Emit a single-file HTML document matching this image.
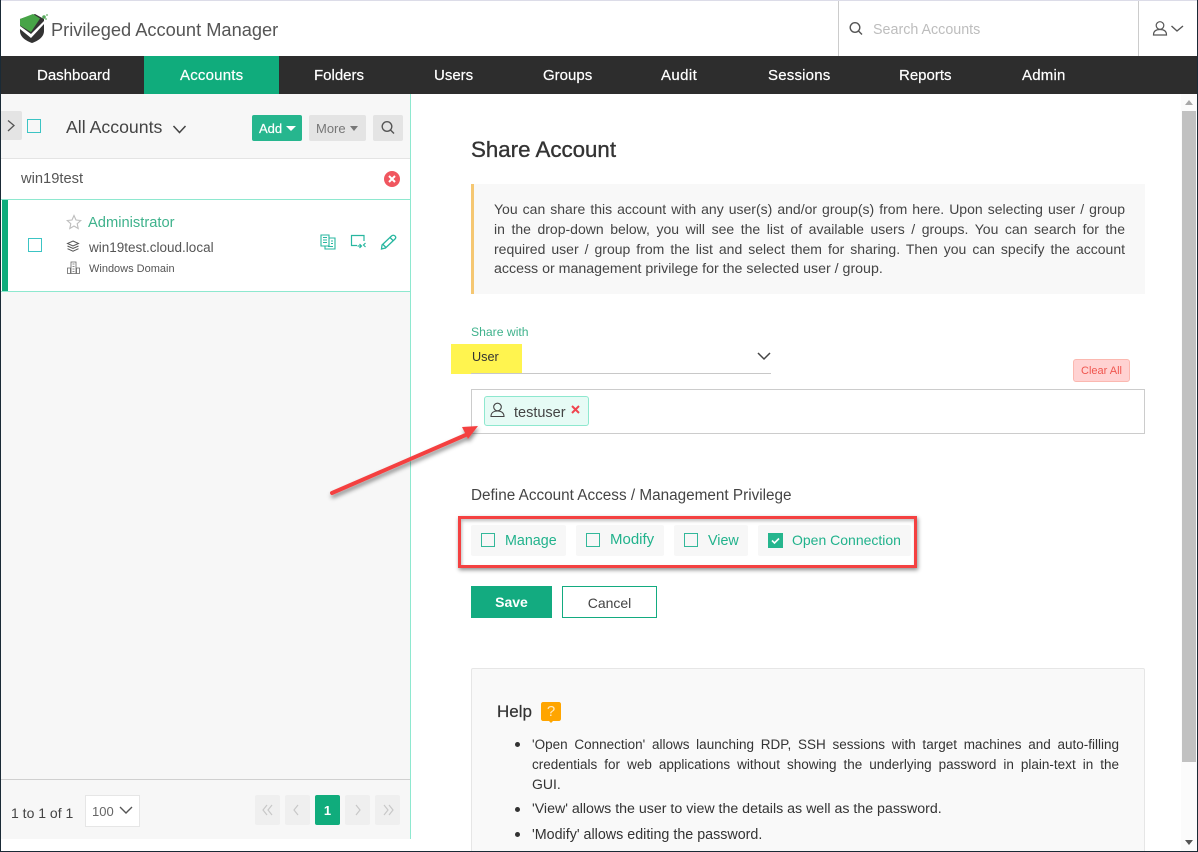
<!DOCTYPE html>
<html><head><meta charset="utf-8">
<style>
html,body{margin:0;padding:0;width:1198px;height:852px;overflow:hidden;background:#fff}
body{position:relative;font-family:"Liberation Sans",sans-serif;color:#333}
.a{position:absolute}
.t{position:absolute;white-space:nowrap}
.nav{position:absolute;top:56px;height:38px;line-height:40px;color:#fff;font-size:15px;font-weight:400;white-space:nowrap;-webkit-text-stroke:.2px #fff}
.cb2{position:absolute;width:12px;height:12px;border:1.5px solid #33b89a;}
.pill{position:absolute;top:525px;height:31px;background:#f7f7f7;border-radius:2px}
.lab{position:absolute;top:533px;font-size:14.3px;color:#21b28c;white-space:nowrap;line-height:16px}
.pg{position:absolute;top:795px;width:25px;height:30px;background:#efefef;border-radius:2px}
.j{position:absolute;text-align:justify;text-align-last:justify;white-space:normal}
</style></head>
<body>
<!-- frame -->
<div class="a" style="left:0;top:0;width:1198px;height:1px;background:#dcdce8"></div>

<!-- logo -->
<svg class="a" style="left:18px;top:11px" width="32" height="34" viewBox="0 0 32 34">
<path d="M2 8 L17 3 L26 8 L26 20 C26 26 20 30 14 32 C8 30 2 26 2 20 Z" fill="#333"/>
<path d="M2 15 L13 23 L27 9 L26 13 L13 27 L2 18 Z" fill="#fff"/>
<path d="M2 8 L15 3 L22 7.500 L13 21 L2 14.500 Z" fill="#47a447"/>
<circle cx="26" cy="6" r="1.800" fill="#55a85a"/><circle cx="29" cy="4" r="1" fill="#8ac48d"/><circle cx="28" cy="8" r="1" fill="#8ac48d"/>
</svg>
<div class="t" style="left:51px;top:18px;font-size:18.25px;line-height:24px;color:#555">Privileged Account Manager</div>

<!-- search -->
<div class="a" style="left:838px;top:1px;width:1px;height:55px;background:#ccc"></div>
<div class="a" style="left:1138px;top:1px;width:1px;height:55px;background:#ccc"></div>
<svg class="a" style="left:848px;top:21px" width="16" height="16" viewBox="0 0 16 16" fill="none" stroke="#555" stroke-width="1.400"><circle cx="7" cy="6.500" r="4.800"/><path d="M10.500 10 L14 13.500"/></svg>
<div class="t" style="left:873px;top:22px;font-size:14.3px;line-height:16px;color:#bdbdbd">Search Accounts</div>
<svg class="a" style="left:1152px;top:20px" width="34" height="17" viewBox="0 0 34 17" fill="none" stroke="#555" stroke-width="1.200"><circle cx="8" cy="5.500" r="3.800"/><path d="M1.500 15 C1.500 11 4 9.500 8 9.500 C12 9.500 14.500 11 14.500 15 Z"/><path d="M19.500 6 L25 11 L31 6" stroke-width="1.400"/></svg>

<!-- nav -->
<div class="a" style="left:0;top:56px;width:1198px;height:38px;background:#2d2d2d"></div>
<div class="a" style="left:144px;top:56px;width:135px;height:38px;background:#10ac7c"></div>
<div class="nav" style="left:37px">Dashboard</div>
<div class="nav" style="left:180px;letter-spacing:.2px">Accounts</div>
<div class="nav" style="left:314px">Folders</div>
<div class="nav" style="left:434px">Users</div>
<div class="nav" style="left:543px">Groups</div>
<div class="nav" style="left:661px;letter-spacing:.4px">Audit</div>
<div class="nav" style="left:768px;letter-spacing:.2px">Sessions</div>
<div class="nav" style="left:899px">Reports</div>
<div class="nav" style="left:1022px;letter-spacing:.2px">Admin</div>

<!-- left panel -->
<div class="a" style="left:1px;top:94px;width:409px;height:745px;background:#f7f7f7"></div>
<div class="a" style="left:410px;top:94px;width:1px;height:745px;background:#8ee8cf"></div>
<div class="a" style="left:1px;top:111px;width:21px;height:29px;background:#e4e4e4;border-radius:0 2px 2px 0"></div>
<svg class="a" style="left:6px;top:119px" width="10" height="14" viewBox="0 0 10 14" fill="none" stroke="#555" stroke-width="1.300"><path d="M2 1.500 L8 6.500 L2 12"/></svg>
<div class="a" style="left:27px;top:119px;width:12px;height:12px;border:1.500px solid #3cc4c4"></div>
<div class="t" style="left:66px;top:117px;font-size:17.7px;line-height:20px;color:#444">All Accounts</div>
<svg class="a" style="left:172px;top:124px" width="15" height="11" viewBox="0 0 15 11" fill="none" stroke="#444" stroke-width="1.500"><path d="M1.500 2 L7.500 8.500 L13.500 2"/></svg>
<div class="a" style="left:252px;top:115px;width:50px;height:26px;background:#26b68e;border-radius:2px"></div>
<div class="t" style="left:259px;top:120px;font-size:13px;line-height:17px;color:#fff;-webkit-text-stroke:.2px #fff">Add</div>
<div class="a" style="left:286px;top:126px;border-left:5px solid transparent;border-right:5px solid transparent;border-top:5px solid #fff"></div>
<div class="a" style="left:309px;top:115px;width:57px;height:26px;background:#e4e4e4;border-radius:2px"></div>
<div class="t" style="left:316px;top:120px;font-size:13px;line-height:17px;color:#777">More</div>
<div class="a" style="left:350px;top:126px;border-left:4.500px solid transparent;border-right:4.500px solid transparent;border-top:5px solid #777"></div>
<div class="a" style="left:373px;top:115px;width:30px;height:26px;background:#e4e4e4;border-radius:2px"></div>
<svg class="a" style="left:380px;top:120px" width="16" height="16" viewBox="0 0 16 16" fill="none" stroke="#555" stroke-width="1.400"><circle cx="7" cy="6.500" r="4.800"/><path d="M10.500 10 L14 13.500"/></svg>

<!-- search result row -->
<div class="a" style="left:1px;top:158px;width:409px;height:41px;background:#fff;border-top:1px solid #e4e4e4"></div>
<div class="t" style="left:21px;top:171px;font-size:14.7px;line-height:17px;color:#555">win19test</div>
<div class="a" style="left:384px;top:171px;width:16px;height:16px;border-radius:50%;background:#f0565f"></div>
<svg class="a" style="left:384px;top:171px" width="16" height="16" viewBox="0 0 16 16" stroke="#fff" stroke-width="2"><path d="M5 5 L11 11 M11 5 L5 11"/></svg>

<!-- account row -->
<div class="a" style="left:1px;top:199px;width:409px;background:#fff;border-top:1px solid #8ee8cf;border-bottom:1px solid #8ee8cf;box-sizing:border-box;height:93px"></div>
<div class="a" style="left:2px;top:200px;width:6px;height:91px;background:#10ac7c"></div>
<div class="a" style="left:28px;top:238px;width:12px;height:12px;border:1.500px solid #3cc4c4"></div>
<svg class="a" style="left:66px;top:214px" width="16" height="16" viewBox="0 0 16 16" fill="none" stroke="#bdbdbd" stroke-width="1.100"><path d="M8 1.500 L10 6 L14.800 6.500 L11.200 9.700 L12.200 14.500 L8 12 L3.800 14.500 L4.800 9.700 L1.200 6.500 L6 6 Z"/></svg>
<div class="t" style="left:88px;top:215px;font-size:14.7px;line-height:16px;color:#3fb28c">Administrator</div>
<svg class="a" style="left:66px;top:240px" width="14" height="13" viewBox="0 0 14 13" fill="none" stroke="#555" stroke-width="1"><path d="M7 1 L12.500 3.500 L7 6 L1.500 3.500 Z"/><path d="M1.500 6 L7 8.500 L12.500 6"/><path d="M1.500 8.700 L7 11.200 L12.500 8.700"/></svg>
<div class="t" style="left:89px;top:240px;font-size:13.5px;line-height:16px;color:#555">win19test.cloud.local</div>
<svg class="a" style="left:67px;top:261px" width="13" height="13" viewBox="0 0 13 13" fill="#777" stroke="#666" stroke-width=".8"><path d="M.5 12.500 V7 H3.500 V12.500 Z M4 12.500 V1 H9 V12.500 Z M9.500 12.500 V7 H12.500 V12.500 Z" fill="none"/><path d="M5.500 3 H7.500 M5.500 5.500 H7.500 M5.500 8 H7.500 M5.500 10.500 H7.500"/></svg>
<div class="t" style="left:89px;top:262px;font-size:11px;line-height:14px;color:#555">Windows Domain</div>
<svg class="a" style="left:320px;top:234px" width="17" height="16" viewBox="0 0 17 16" fill="none" stroke="#28b7a0" stroke-width="1.100"><path d="M1 1 H9 V12 H1 Z M3 3.500 H7 M3 6 H7 M3 8.500 H7"/><path d="M9 4 H15 V15 H5 V12 M11 7 H13 M11 9.500 H13 M8 12.500 H13"/></svg>
<svg class="a" style="left:350px;top:234px" width="17" height="15" viewBox="0 0 17 15" fill="none" stroke="#28b7a0" stroke-width="1.200"><path d="M14 7 V1.500 H1.500 V11.500 H7"/><path d="M7.500 12 H11 M9.500 10 L11.500 12 L9.500 14 M15.500 9 L13.500 11 L15.500 13"/></svg>
<svg class="a" style="left:380px;top:234px" width="17" height="16" viewBox="0 0 17 16" fill="none" stroke="#28b7a0" stroke-width="1.300"><path d="M2 11 L11.500 2 C12.500 1 14 1 15 2 C16 3 16 4 15 5 L5.500 14 L1.500 15 Z"/><path d="M10 3.500 L13.500 7 M3 10.500 L6 13.500"/></svg>

<!-- footer left -->
<div class="a" style="left:1px;top:779px;width:409px;height:1px;background:#d0d0d0"></div>
<div class="t" style="left:11px;top:805px;font-size:14px;line-height:16px;color:#444">1 to 1 of 1</div>
<div class="a" style="left:85px;top:795px;width:53px;height:30px;background:#fff;border:1px solid #e6e6e6"></div>
<div class="t" style="left:92px;top:804px;font-size:13px;line-height:15px;color:#666">100</div>
<svg class="a" style="left:119px;top:806px" width="14" height="9" viewBox="0 0 14 9" fill="none" stroke="#555" stroke-width="1.400"><path d="M1 1 L7 7 L13 1"/></svg>
<div class="pg" style="left:255px"></div>
<div class="pg" style="left:285px"></div>
<div class="pg" style="left:315px;background:#10ac7c"></div>
<div class="pg" style="left:345px"></div>
<div class="pg" style="left:375px"></div>
<svg class="a" style="left:255px;top:795px" width="145" height="30" viewBox="0 0 145 30" fill="none" stroke="#c8c8c8" stroke-width="1.200"><path d="M13 10 L9 15 L13 20 M18 10 L14 15 L18 20 M44 10 L40 15 L44 20 M102 10 L106 15 L102 20 M130 10 L134 15 L130 20 M135 10 L139 15 L135 20" transform="translate(-1 0)"/></svg>
<div class="t" style="left:315px;top:803px;width:25px;text-align:center;font-size:13px;line-height:15px;color:#fff;font-weight:bold">1</div>

<!-- right content -->
<div class="t" style="left:471px;top:137px;font-size:22.3px;line-height:26px;color:#333;-webkit-text-stroke:.35px #333">Share Account</div>
<div class="a" style="left:471px;top:184px;width:674px;height:110px;background:#f8f8f8"></div>
<div class="a" style="left:471px;top:184px;width:3px;height:110px;background:#f5c772"></div>
<div class="j" style="left:494px;top:199px;width:631px;font-size:14px;line-height:20px;color:#444">You can share this account with any user(s) and/or group(s) from here. Upon selecting user / group</div>
<div class="j" style="left:494px;top:219px;width:631px;font-size:14px;line-height:20px;color:#444">in the drop-down below, you will see the list of available users / groups. You can search for the</div>
<div class="j" style="left:494px;top:239px;width:631px;font-size:14px;line-height:20px;color:#444">required user / group from the list and select them for sharing. Then you can specify the account</div>
<div class="t" style="left:494px;top:259px;font-size:14.2px;line-height:20px;color:#444">access or management privilege for the selected user / group.</div>

<div class="t" style="left:471px;top:325px;font-size:12.2px;line-height:15px;color:#3fb28c">Share with</div>
<div class="a" style="left:451px;top:344px;width:71px;height:30px;background:#fff44f"></div>
<div class="t" style="left:472px;top:350px;font-size:12.7px;line-height:15px;color:#333">User</div>
<div class="a" style="left:471px;top:373px;width:300px;height:1px;background:#c8c8c8"></div>
<svg class="a" style="left:757px;top:351px" width="14" height="10" viewBox="0 0 14 10" fill="none" stroke="#444" stroke-width="1.500"><path d="M1 2 L7 8 L13 2"/></svg>

<div class="a" style="left:1073px;top:359px;width:55px;height:21px;background:#ffd2d2;border:1px solid #fbb8b0;border-radius:3px"></div>
<div class="t" style="left:1081px;top:364px;font-size:11px;line-height:14px;color:#f0564f">Clear All</div>

<div class="a" style="left:471px;top:389px;width:672px;height:43px;background:#fff;border:1px solid #ccc"></div>
<div class="a" style="left:484px;top:396px;width:103px;height:28px;background:#e6fbf5;border:1px solid #8ee8cf;border-radius:3px"></div>
<svg class="a" style="left:490px;top:402px" width="15" height="16" viewBox="0 0 15 16" fill="none" stroke="#444" stroke-width="1.100"><circle cx="7.500" cy="5" r="3.800"/><path d="M1 14.500 C1 11 3.500 9 7.500 9 C11.500 9 14 11 14 14.500 Z"/></svg>
<div class="t" style="left:514px;top:405px;font-size:14.5px;line-height:16px;color:#444">testuser</div>
<svg class="a" style="left:571px;top:405px" width="9" height="9" viewBox="0 0 9 9" stroke="#f0454f" stroke-width="2"><path d="M1 1 L8 8 M8 1 L1 8"/></svg>

<div class="t" style="left:471px;top:488px;font-size:15.3px;line-height:16px;color:#444">Define Account Access / Management Privilege</div>

<div class="pill" style="left:471px;width:95px"></div>
<div class="pill" style="left:576px;width:88px"></div>
<div class="pill" style="left:674px;width:74px"></div>
<div class="pill" style="left:758px;width:153px"></div>
<div class="cb2" style="left:481px;top:533px"></div>
<div class="cb2" style="left:586px;top:533px"></div>
<div class="cb2" style="left:684px;top:533px"></div>
<div class="a" style="left:768px;top:533px;width:15px;height:15px;background:#26b68e"></div>
<svg class="a" style="left:768px;top:533px" width="15" height="15" viewBox="0 0 15 15" fill="none" stroke="#fff" stroke-width="1.600"><path d="M4 7.500 L6.500 10 L11 5.500"/></svg>
<div class="lab" style="left:505px">Manage</div>
<div class="lab" style="left:610px;font-size:15px;top:532px">Modify</div>
<div class="lab" style="left:708px">View</div>
<div class="lab" style="left:792px;font-size:14px;top:532px">Open Connection</div>
<div class="a" style="left:458px;top:516px;width:453px;height:46px;border:3px solid #f44141;box-shadow:1px 2px 4px rgba(0,0,0,.45), inset 1px 2px 3px rgba(0,0,0,.25)"></div>

<div class="a" style="left:471px;top:586px;width:81px;height:32px;background:#13ab80"></div>
<div class="t" style="left:471px;top:594px;width:81px;text-align:center;font-size:14px;line-height:16px;color:#fff;font-weight:bold">Save</div>
<div class="a" style="left:562px;top:586px;width:93px;height:30px;border:1px solid #13ab80;background:#fff"></div>
<div class="t" style="left:562px;top:595px;width:95px;text-align:center;font-size:14px;line-height:16px;color:#444">Cancel</div>

<!-- help -->
<div class="a" style="left:471px;top:668px;width:672px;height:184px;background:#f9f9f9;border:1px solid #e6e6e6;border-radius:2px"></div>
<div class="t" style="left:497px;top:702px;font-size:17px;line-height:20px;color:#333;-webkit-text-stroke:.2px #333">Help</div>
<svg class="a" style="left:541px;top:702px" width="20" height="22" viewBox="0 0 20 22"><path d="M2 0 H18 C19 0 20 1 20 2 V17 C20 18 19 19 18 19 H12 L10 21 L8 19 H2 C1 19 0 18 0 17 V2 C0 1 1 0 2 0 Z" fill="#ffa500"/></svg>
<div class="t" style="left:541px;top:702px;width:20px;text-align:center;font-size:15px;line-height:20px;color:#ffe9c0">?</div>
<div class="a" style="left:515px;top:742px;width:5px;height:5px;border-radius:50%;background:#333"></div>
<div class="a" style="left:515px;top:807px;width:5px;height:5px;border-radius:50%;background:#333"></div>
<div class="a" style="left:515px;top:832px;width:5px;height:5px;border-radius:50%;background:#333"></div>
<div class="j" style="left:532px;top:735px;width:587px;font-size:13.5px;line-height:20px;color:#333">'Open Connection' allows launching RDP, SSH sessions with target machines and auto-filling</div>
<div class="j" style="left:532px;top:755px;width:587px;font-size:13.5px;line-height:20px;color:#333">credentials for web applications without showing the underlying password in plain-text in the</div>
<div class="t" style="left:532px;top:774px;font-size:14px;line-height:20px;color:#333">GUI.</div>
<div class="t" style="left:532px;top:799px;font-size:14.2px;line-height:20px;color:#333">'View' allows the user to view the details as well as the password.</div>
<div class="t" style="left:532px;top:825px;font-size:14.3px;line-height:20px;color:#333">'Modify' allows editing the password.</div>

<!-- scrollbar -->
<div class="a" style="left:1181px;top:94px;width:16px;height:757px;background:#fbfbfb"></div>
<div class="a" style="left:1182px;top:111px;width:14px;height:651px;background:#c1c1c1"></div>
<div class="a" style="left:1185px;top:100px;border-left:4px solid transparent;border-right:4px solid transparent;border-bottom:5px solid #a8a8a8"></div>
<div class="a" style="left:1185px;top:840px;border-left:4px solid transparent;border-right:4px solid transparent;border-top:5px solid #555"></div>

<!-- arrow -->
<svg class="a" style="left:320px;top:415px" width="170" height="90" viewBox="0 0 170 90">
<defs><filter id="s" x="-20%" y="-20%" width="140%" height="140%"><feDropShadow dx="1" dy="3" stdDeviation="2" flood-color="#000" flood-opacity=".45"/></filter></defs>
<g filter="url(#s)"><path d="M12 78 L148 19" stroke="#f44141" stroke-width="4" stroke-linecap="round" fill="none"/><path d="M158 11 L142 12 L148 24 Z" fill="#f44141"/></g>
</svg>

<!-- frame edges -->
<div class="a" style="left:0;top:0;width:1px;height:852px;background:#1a2a36"></div>
<div class="a" style="left:1197px;top:0;width:1px;height:852px;background:#1a2a36"></div>
<div class="a" style="left:0;top:851px;width:1198px;height:1px;background:#1a2a36"></div>
</body></html>
